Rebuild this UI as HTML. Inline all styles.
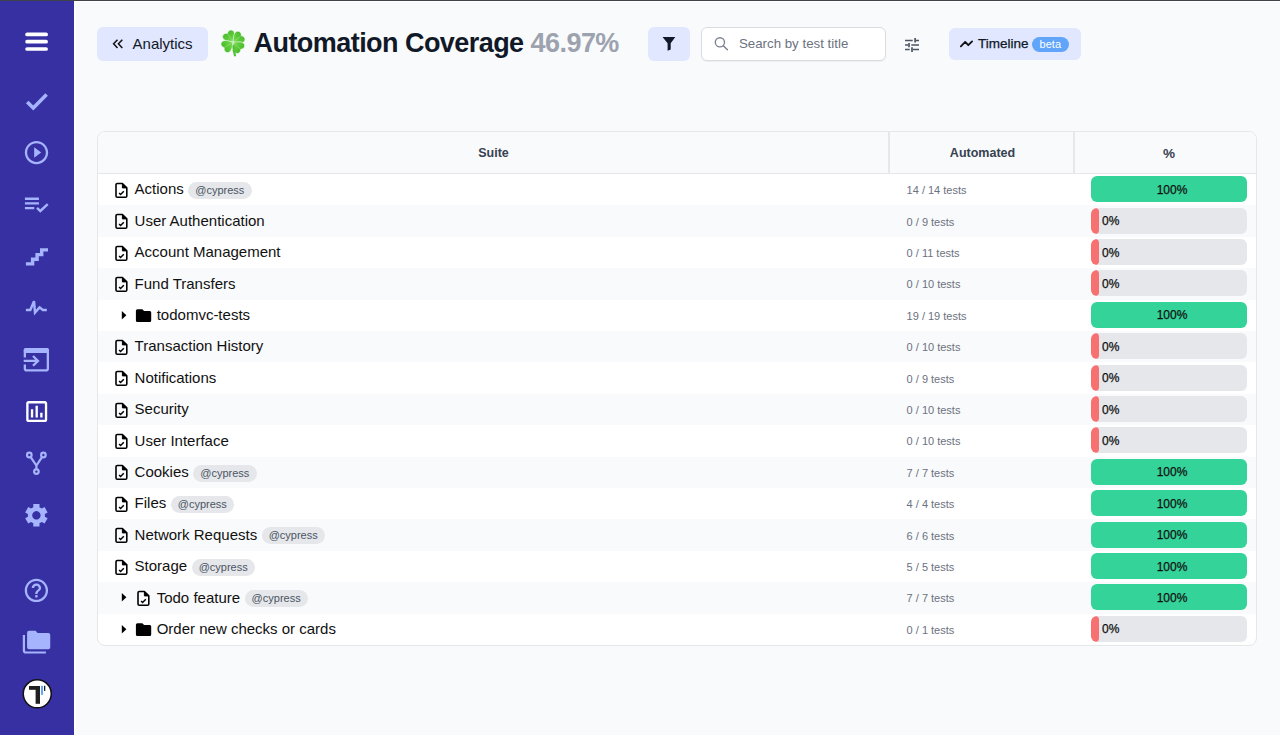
<!DOCTYPE html>
<html><head><meta charset="utf-8">
<style>
*{box-sizing:border-box;margin:0;padding:0}
html,body{width:1280px;height:735px;overflow:hidden;background:#f9fafb;font-family:"Liberation Sans",sans-serif;color:#111827}
.a{position:absolute}
.topline{left:0;top:0;width:1280px;height:1px;background:#3f4248}
.side{left:0;top:1px;width:74px;height:734px;background:#3730a3}
.sideedge{left:74px;top:1px;width:1.5px;height:734px;background:#fff}
.t{position:absolute;white-space:nowrap;line-height:1}
.btn{background:#e0e7ff;border-radius:6px}
.tbl{left:97px;top:131px;width:1160px;height:515px;border:1px solid #e5e7eb;border-radius:8px;background:#fff;overflow:hidden}
.hdr{left:0;top:0;width:1158px;height:42px;background:#f9fafb;border-bottom:1px solid #e5e7eb}
.row{position:absolute;left:0;width:1158px;height:31.4px}
.g{background:#f9fafb}
.nm{position:absolute;top:0;display:flex;align-items:flex-start;white-space:nowrap}
.name{display:block;margin-top:7.4px;font-size:15px;line-height:15px;color:#111}
.pill{display:block;margin-top:8px;margin-left:4.5px;height:17px;border-radius:9px;background:#e5e7eb;color:#4b5563;font-size:11px;line-height:17px;padding:0 7.5px 0 7px}
.cnt{position:absolute;left:808.6px;top:11.2px;font-size:11px;line-height:11px;color:#6b7280}
.bar{position:absolute;left:993px;top:2.3px;width:156px;height:26px;border-radius:6px;background:#e5e7eb;overflow:hidden}
.bar.full{background:#34d399}
.bar .red{position:absolute;left:0;top:0;width:7.8px;height:26px;background:#f87171;border-radius:4px}
.bar .pt{position:absolute;top:7.6px;font-size:12px;line-height:12px;color:#111;-webkit-text-stroke:0.25px #111}
.bar.full .pt{left:3px;width:156px;text-align:center}
.bar .pt0{left:11px}
</style></head><body>
<svg width="0" height="0" style="position:absolute">
<defs>
<symbol id="fi" viewBox="0 0 16 18">
  <path d="M4.3,1.5 H9.4 L13.8,5.9 V14 a1.3,1.3 0 0 1 -1.3,1.3 H4.3 a1.3,1.3 0 0 1 -1.3,-1.3 V2.8 a1.3,1.3 0 0 1 1.3,-1.3 Z" stroke="#000" stroke-width="1.6" fill="none" stroke-linejoin="round"/>
  <path d="M9.4,1.5 V5.9 H13.8 Z" fill="#000" stroke="#000" stroke-width="1" stroke-linejoin="round"/>
  <path d="M6.1,10.9 L7.6,12.5 L10.8,9.2" stroke="#000" stroke-width="1.5" fill="none"/>
</symbol>
<symbol id="fo" viewBox="0 0 18 18">
  <path d="M2.4,2.3 H7.3 L9.1,4.1 H14.7 a1.5,1.5 0 0 1 1.5,1.5 V13.4 a1.5,1.5 0 0 1 -1.5,1.5 H2.4 a1.5,1.5 0 0 1 -1.5,-1.5 V3.8 a1.5,1.5 0 0 1 1.5,-1.5 Z" fill="#000"/>
</symbol>
</defs></svg>
<div class="a topline"></div>
<div class="a side"></div>
<div class="a sideedge"></div>
<div class="a" style="left:74px;top:1px;width:1206px;height:1px;background:#fff"></div>

<!-- Sidebar icons -->
<svg class="a" style="left:0;top:0" width="74" height="735" viewBox="0 0 74 735">
  <g stroke="#fff" stroke-width="3.7" stroke-linecap="round" fill="none">
    <line x1="27.1" y1="34.4" x2="46.1" y2="34.4"/>
    <line x1="27.1" y1="41.7" x2="46.1" y2="41.7"/>
    <line x1="27.1" y1="49" x2="46.1" y2="49"/>
  </g>
  <g fill="#a5b4fc">
    <!-- check -->
    
    <!-- play circle -->
    <path transform="translate(22.5 138.6) scale(1.1667)" d="M10 16.5l6-4.5-6-4.5v9zM12 2C6.48 2 2 6.48 2 12s4.48 10 10 10 10-4.48 10-10S17.52 2 12 2zm0 18c-4.41 0-8-3.59-8-8s3.59-8 8-8 8 3.59 8 8-3.59 8-8 8z"/>
    <!-- playlist check -->
    <path transform="translate(22.6 190.6) scale(1.1667)" d="M14 10H2v2h12v-2zm0-4H2v2h12V6zM2 16h8v-2H2v2z"/>
    <!-- gear -->
    <path fill-rule="evenodd" d="M33.32,507.27 L33.30,504.12 L39.50,504.12 L39.48,507.27 L41.81,508.62 L44.53,507.03 L47.63,512.40 L44.89,513.95 L44.89,516.65 L47.63,518.20 L44.53,523.57 L41.81,521.98 L39.48,523.33 L39.50,526.48 L33.30,526.48 L33.32,523.33 L30.99,521.98 L28.27,523.57 L25.17,518.20 L27.91,516.65 L27.91,513.95 L25.17,512.40 L28.27,507.03 L30.99,508.62 Z M36.4,511.1 a4.2,4.2 0 1 0 0.01,0 Z"/>
    <!-- help -->
    <path transform="translate(22.4 576.4) scale(1.1667)" d="M11 18h2v-2h-2v2zm1-16C6.48 2 2 6.48 2 12s4.48 10 10 10 10-4.48 10-10S17.52 2 12 2zm0 18c-4.41 0-8-3.59-8-8s3.59-8 8-8 8 3.59 8 8-3.59 8-8 8zm0-14c-2.21 0-4 1.79-4 4h2c0-1.1.9-2 2-2s2 .9 2 2c0 2-3 1.75-3 5h2c0-2.25 3-2.5 3-5 0-2.21-1.79-4-4-4z"/>
    <!-- folder copy front -->
    <path d="M29.1,630.75 H35.6 L37.6,633 H48.25 a2,2 0 0 1 2,2 V647.3 a2,2 0 0 1 -2,2 H29.1 a2,2 0 0 1 -2,-2 V632.75 a2,2 0 0 1 2,-2 Z"/>
  </g>
  <g stroke="#a5b4fc" fill="none">
    <!-- check2 -->
    <polyline stroke-width="3.6" points="27.2,101.95 33.3,108.05 46.6,94.4"/>
    <polyline stroke-width="2.4" points="37.05,207.85 40.3,211 47.75,204.1"/>
    <!-- stairs -->
    <polyline stroke-width="3.4" points="25.9,263.85 32.6,263.85 32.6,259.3 37.1,259.3 37.1,254.6 41.7,254.6 41.7,249.9 48,249.9"/>
    <!-- pulse -->
    <polyline stroke-width="2.4" stroke-linejoin="miter" points="25.9,310 30.3,310 34,301.2 35,312.6 39.6,307.4 42.8,310 46.8,310"/>
    <!-- input -->
    <path stroke-width="2.3" d="M24.85,357.6 V351.2 a2,2 0 0 1 2,-2 H45.85 a2,2 0 0 1 2,2 V368.45 a2,2 0 0 1 -2,2 H26.85 a2,2 0 0 1 -2,-2 V364.5"/>
    <path stroke-width="2.3" d="M23.7,360.9 H38.2 M33,356 L38,360.9 L33,365.75"/>
    <!-- fork -->
    <g stroke-width="2.2">
      <circle cx="29.3" cy="455" r="2.3"/>
      <circle cx="43.4" cy="455" r="2.3"/>
      <circle cx="36.4" cy="471.6" r="2.3"/>
      <path d="M30.7,457.2 L36.4,465.5 L42,457.2 M36.4,465.5 V469.3"/>
    </g>
    <!-- folder back L -->
    <path stroke-width="2.2" d="M23.9,635 V650.5 a2,2 0 0 0 2,2 H45.9"/>
  </g>
  <rect x="23.7" y="348.1" width="25.3" height="5" rx="2" fill="#a5b4fc"/>
  <!-- chart (white) -->
  <path fill="#fff" transform="translate(22.7 397.6) scale(1.1667)" d="M19 3H5c-1.1 0-2 .9-2 2v14c0 1.1.9 2 2 2h14c1.1 0 2-.9 2-2V5c0-1.1-.9-2-2-2zm0 16H5V5h14v14zM7 10h2v7H7zm4-3h2v10h-2zm4 6h2v4h-2z"/>
  <!-- avatar -->
  <circle cx="37.25" cy="693.8" r="14" fill="#fff" stroke="#111" stroke-width="1.5"/>
  <rect x="29" y="686" width="11" height="3.8" fill="#1f1f1f"/>
  <rect x="35.6" y="686" width="4.4" height="17.8" fill="#1f1f1f"/>
  <rect x="41" y="685.8" width="2" height="9" fill="#60a5fa"/>
  <rect x="44" y="685.8" width="1.3" height="5.1" fill="#1f1f1f"/>
</svg>

<!-- Toolbar -->
<div class="a btn" style="left:97px;top:27px;width:111px;height:34px;border-radius:6px"></div>
<svg class="a" style="left:100px;top:30px" width="30" height="28" viewBox="100 30 30 28">
  <path d="M117.5,39.7 L113.6,43.8 L117.5,47.9 M122.3,39.7 L118.4,43.8 L122.3,47.9" stroke="#111" stroke-width="1.5" fill="none"/>
</svg>
<div class="t" style="left:132.6px;top:36.05px;font-size:15px;color:#111827">Analytics</div>

<svg class="a" style="left:216px;top:26px" width="34" height="34" viewBox="216 26 34 34">
  <defs>
    <linearGradient id="lg" x1="0" y1="0" x2="0" y2="-12.5" gradientUnits="userSpaceOnUse">
      <stop offset="0" stop-color="#7fdb5c"/>
      <stop offset="0.5" stop-color="#5ccb38"/>
      <stop offset="1" stop-color="#4ab92b"/>
    </linearGradient>
  </defs>
  
  <g transform="translate(233.1 42.2)"><g transform="rotate(-33)"><path d="M0,0 C-1.2,-1.5 -6.4,-4.4 -6.4,-8.4 C-6.4,-11.6 -2.6,-13 0,-10.4 C2.6,-13 6.4,-11.6 6.4,-8.4 C6.4,-4.4 1.2,-1.5 0,0 Z" fill="url(#lg)" stroke="#f9fafb" stroke-width="0.55"/><path d="M0,-1 L0,-9.5" stroke="#9be87c" stroke-width="0.9" opacity="0.6"/></g><g transform="rotate(52)"><path d="M0,0 C-1.2,-1.5 -6.4,-4.4 -6.4,-8.4 C-6.4,-11.6 -2.6,-13 0,-10.4 C2.6,-13 6.4,-11.6 6.4,-8.4 C6.4,-4.4 1.2,-1.5 0,0 Z" fill="url(#lg)" stroke="#f9fafb" stroke-width="0.55"/><path d="M0,-1 L0,-9.5" stroke="#9be87c" stroke-width="0.9" opacity="0.6"/></g><g transform="rotate(133)"><path d="M0,0 C-1.2,-1.5 -6.4,-4.4 -6.4,-8.4 C-6.4,-11.6 -2.6,-13 0,-10.4 C2.6,-13 6.4,-11.6 6.4,-8.4 C6.4,-4.4 1.2,-1.5 0,0 Z" fill="url(#lg)" stroke="#f9fafb" stroke-width="0.55"/><path d="M0,-1 L0,-9.5" stroke="#9be87c" stroke-width="0.9" opacity="0.6"/></g><g transform="rotate(238)"><path d="M0,0 C-1.2,-1.5 -6.4,-4.4 -6.4,-8.4 C-6.4,-11.6 -2.6,-13 0,-10.4 C2.6,-13 6.4,-11.6 6.4,-8.4 C6.4,-4.4 1.2,-1.5 0,0 Z" fill="url(#lg)" stroke="#f9fafb" stroke-width="0.55"/><path d="M0,-1 L0,-9.5" stroke="#9be87c" stroke-width="0.9" opacity="0.6"/></g></g>
<path d="M233.5,46 C233.4,49.5 233.9,52.5 235,55.4" stroke="#55c236" stroke-width="2.2" fill="none" stroke-linecap="round"/></svg>
<div class="t" style="left:253.5px;top:30.3px;font-size:27px;letter-spacing:-0.55px;font-weight:bold;color:#111827">Automation Coverage <span style="color:#9ca3af">46.97%</span></div>

<div class="a btn" style="left:648px;top:27px;width:42px;height:34px"></div>
<svg class="a" style="left:650px;top:30px" width="40" height="28" viewBox="650 30 40 28">
  <path d="M662.5,36.9 H675.3 L670.7,43.3 V49.6 L667.6,50.8 V43.3 Z" fill="#111827"/>
</svg>

<div class="a" style="left:701px;top:27px;width:185px;height:34px;background:#fff;border:1px solid #d9dce1;border-radius:6px;box-shadow:0 1px 1px rgba(0,0,0,.05)"></div>
<svg class="a" style="left:705px;top:30px" width="30" height="28" viewBox="705 30 30 28">
  <circle cx="719.9" cy="42.3" r="4.6" stroke="#7a8290" stroke-width="1.35" fill="none"/>
  <path d="M723.3,45.7 L727.4,49.8" stroke="#7a8290" stroke-width="1.45" stroke-linecap="round"/>
</svg>
<div class="t" style="left:738.9px;top:37.4px;font-size:13.3px;color:#6b7280">Search by test title</div>

<svg class="a" style="left:900px;top:34px" width="24" height="22" viewBox="900 34 24 22">
  <g stroke="#4b5563" stroke-width="1.5" fill="none">
    <path d="M905,40.4 H912.7 M916,40.4 H919 M905,45 H908.3 M911.3,45 H919 M905,49.5 H909.7 M913,49.5 H919"/>
    <path stroke-width="1.7" d="M915.1,38 V42.6 M909,43 V47.2 M912,47.2 V52"/>
  </g>
</svg>

<div class="a btn" style="left:949px;top:28px;width:132px;height:32px"></div>
<svg class="a" style="left:955px;top:34px" width="24" height="20" viewBox="955 34 24 20">
  <polyline points="960.85,46.4 965.2,41.9 968.3,45.2 972.1,41.35" stroke="#111" stroke-width="1.8" fill="none" stroke-linecap="round" stroke-linejoin="round"/>
</svg>
<div class="t" style="left:977.9px;top:37.3px;font-size:13.5px;color:#111827;-webkit-text-stroke:0.25px #111827">Timeline</div>
<div class="a" style="left:1031.8px;top:36.6px;width:37px;height:15px;border-radius:8px;background:#60a5fa"></div>
<div class="t" style="left:1039.6px;top:38.5px;font-size:11px;color:#fff">beta</div>

<!-- Table -->
<div class="a tbl">
  <div class="a hdr">
    <div class="a" style="left:790px;top:0;width:2px;height:41px;background:#e5e7eb"></div>
    <div class="a" style="left:975px;top:0;width:2px;height:41px;background:#e5e7eb"></div>
    <div class="t" style="left:0;width:791px;text-align:center;top:15.2px;font-size:12.5px;font-weight:bold;color:#374151">Suite</div>
    <div class="t" style="left:793px;width:183px;text-align:center;top:15.2px;font-size:12.5px;font-weight:bold;color:#374151">Automated</div>
    <div class="t" style="left:981px;width:180px;text-align:center;top:14.7px;font-size:13.5px;font-weight:bold;color:#374151">%</div>
  </div>
  <!--ROWS-->
<div class="row" style="top:42.0px"><svg class="a" style="left:15.0px;top:7.9px" width="16" height="18"><use href="#fi"/></svg><div class="nm" style="left:36.6px"><span class="name">Actions</span><span class="pill">@cypress</span></div><div class="cnt">14 / 14 tests</div><div class="bar full"><div class="pt">100%</div></div></div>
<div class="row g" style="top:73.4px"><svg class="a" style="left:15.0px;top:7.9px" width="16" height="18"><use href="#fi"/></svg><div class="nm" style="left:36.6px"><span class="name">User Authentication</span></div><div class="cnt">0 / 9 tests</div><div class="bar"><div class="red"></div><div class="pt pt0">0%</div></div></div>
<div class="row" style="top:104.8px"><svg class="a" style="left:15.0px;top:7.9px" width="16" height="18"><use href="#fi"/></svg><div class="nm" style="left:36.6px"><span class="name">Account Management</span></div><div class="cnt">0 / 11 tests</div><div class="bar"><div class="red"></div><div class="pt pt0">0%</div></div></div>
<div class="row g" style="top:136.2px"><svg class="a" style="left:15.0px;top:7.9px" width="16" height="18"><use href="#fi"/></svg><div class="nm" style="left:36.6px"><span class="name">Fund Transfers</span></div><div class="cnt">0 / 10 tests</div><div class="bar"><div class="red"></div><div class="pt pt0">0%</div></div></div>
<div class="row" style="top:167.6px"><svg class="a" style="left:0;top:0" width="60" height="31" viewBox="0 0 60 31"><path d="M23.8,10.9 L28.4,15.15 L23.8,19.4 Z" fill="#000"/></svg><svg class="a" style="left:37.1px;top:7.7px" width="18" height="18"><use href="#fo"/></svg><div class="nm" style="left:58.7px"><span class="name">todomvc-tests</span></div><div class="cnt">19 / 19 tests</div><div class="bar full"><div class="pt">100%</div></div></div>
<div class="row g" style="top:199.0px"><svg class="a" style="left:15.0px;top:7.9px" width="16" height="18"><use href="#fi"/></svg><div class="nm" style="left:36.6px"><span class="name">Transaction History</span></div><div class="cnt">0 / 10 tests</div><div class="bar"><div class="red"></div><div class="pt pt0">0%</div></div></div>
<div class="row" style="top:230.4px"><svg class="a" style="left:15.0px;top:7.9px" width="16" height="18"><use href="#fi"/></svg><div class="nm" style="left:36.6px"><span class="name">Notifications</span></div><div class="cnt">0 / 9 tests</div><div class="bar"><div class="red"></div><div class="pt pt0">0%</div></div></div>
<div class="row g" style="top:261.8px"><svg class="a" style="left:15.0px;top:7.9px" width="16" height="18"><use href="#fi"/></svg><div class="nm" style="left:36.6px"><span class="name">Security</span></div><div class="cnt">0 / 10 tests</div><div class="bar"><div class="red"></div><div class="pt pt0">0%</div></div></div>
<div class="row" style="top:293.2px"><svg class="a" style="left:15.0px;top:7.9px" width="16" height="18"><use href="#fi"/></svg><div class="nm" style="left:36.6px"><span class="name">User Interface</span></div><div class="cnt">0 / 10 tests</div><div class="bar"><div class="red"></div><div class="pt pt0">0%</div></div></div>
<div class="row g" style="top:324.6px"><svg class="a" style="left:15.0px;top:7.9px" width="16" height="18"><use href="#fi"/></svg><div class="nm" style="left:36.6px"><span class="name">Cookies</span><span class="pill">@cypress</span></div><div class="cnt">7 / 7 tests</div><div class="bar full"><div class="pt">100%</div></div></div>
<div class="row" style="top:356.0px"><svg class="a" style="left:15.0px;top:7.9px" width="16" height="18"><use href="#fi"/></svg><div class="nm" style="left:36.6px"><span class="name">Files</span><span class="pill">@cypress</span></div><div class="cnt">4 / 4 tests</div><div class="bar full"><div class="pt">100%</div></div></div>
<div class="row g" style="top:387.4px"><svg class="a" style="left:15.0px;top:7.9px" width="16" height="18"><use href="#fi"/></svg><div class="nm" style="left:36.6px"><span class="name">Network Requests</span><span class="pill">@cypress</span></div><div class="cnt">6 / 6 tests</div><div class="bar full"><div class="pt">100%</div></div></div>
<div class="row" style="top:418.8px"><svg class="a" style="left:15.0px;top:7.9px" width="16" height="18"><use href="#fi"/></svg><div class="nm" style="left:36.6px"><span class="name">Storage</span><span class="pill">@cypress</span></div><div class="cnt">5 / 5 tests</div><div class="bar full"><div class="pt">100%</div></div></div>
<div class="row g" style="top:450.2px"><svg class="a" style="left:0;top:0" width="60" height="31" viewBox="0 0 60 31"><path d="M23.8,10.9 L28.4,15.15 L23.8,19.4 Z" fill="#000"/></svg><svg class="a" style="left:37.1px;top:7.9px" width="16" height="18"><use href="#fi"/></svg><div class="nm" style="left:58.7px"><span class="name">Todo feature</span><span class="pill">@cypress</span></div><div class="cnt">7 / 7 tests</div><div class="bar full"><div class="pt">100%</div></div></div>
<div class="row" style="top:481.6px"><svg class="a" style="left:0;top:0" width="60" height="31" viewBox="0 0 60 31"><path d="M23.8,10.9 L28.4,15.15 L23.8,19.4 Z" fill="#000"/></svg><svg class="a" style="left:37.1px;top:7.7px" width="18" height="18"><use href="#fo"/></svg><div class="nm" style="left:58.7px"><span class="name">Order new checks or cards</span></div><div class="cnt">0 / 1 tests</div><div class="bar"><div class="red"></div><div class="pt pt0">0%</div></div></div>
<!--/ROWS-->
</div>
</body></html>
